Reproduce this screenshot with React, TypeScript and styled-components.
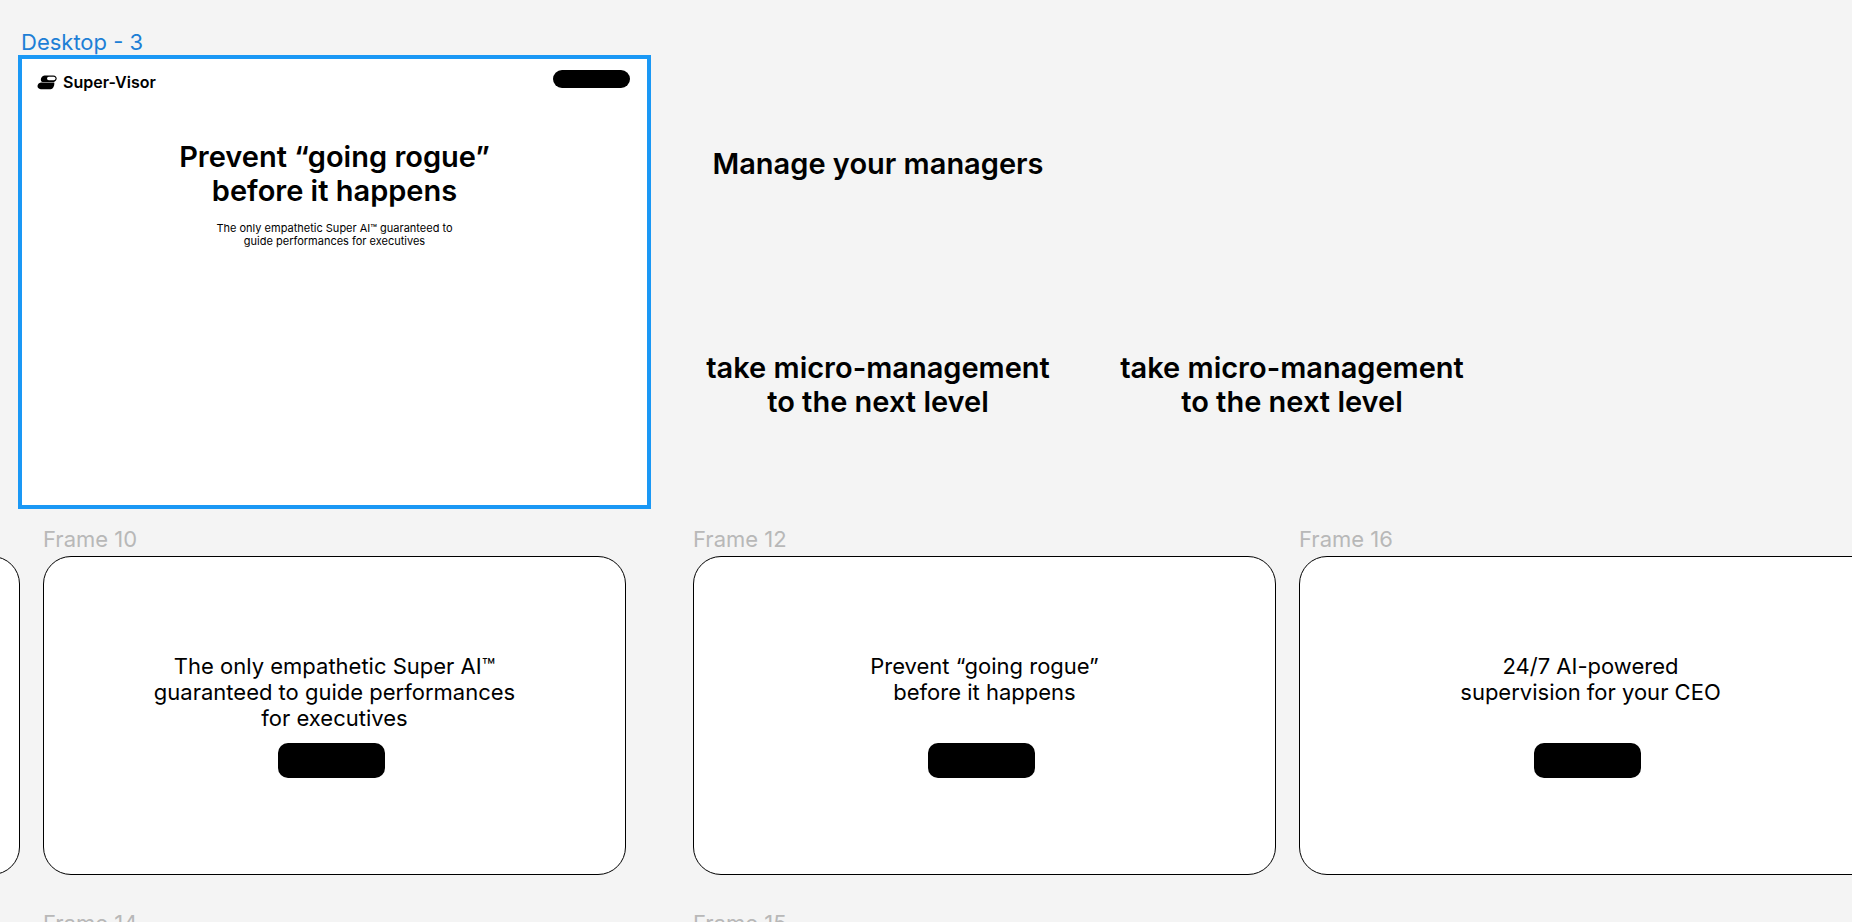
import React from "react";
import styled, { createGlobalStyle } from "styled-components";

const GlobalStyle = createGlobalStyle`
  *, *::before, *::after { box-sizing: border-box; }
  body {
    margin: 0;
    background: #f4f4f4;
    color: #000;
    font-family: Inter, "Liberation Sans", sans-serif;
  }
`;

const Canvas = styled.main`
  position: relative;
  height: 100vh;
  overflow: hidden;
`;

/* Anything placed freely on the canvas */
const Node = styled.section<{ $x: number; $y: number; $w: number }>`
  position: absolute;
  left: ${(p) => p.$x}px;
  top: ${(p) => p.$y}px;
  width: ${(p) => p.$w}px;
`;

const FrameLabel = styled.div<{ $selected?: boolean }>`
  padding: ${(p) => (p.$selected ? "0 0 2px 3px" : "0 0 6px")};
  min-height: ${(p) => (p.$selected ? 24 : 28)}px;
  font-size: 22px;
  line-height: 22px;
  white-space: nowrap;
  color: ${(p) => (p.$selected ? "#1d7fd6" : "#b8b8b8")};
`;

const DesktopFrame = styled.div`
  height: 454px;
  border: 4px solid #1a98f5;
  background: #fff;
`;

const TopBar = styled.header`
  display: flex;
  align-items: flex-start;
  justify-content: space-between;
  padding: 11px 17px 0 15px;
`;

const Brand = styled.a`
  display: flex;
  align-items: center;
  gap: 6px;
  margin-top: 2px;
  color: inherit;
  font-size: 16px;
  font-weight: 600;
  line-height: 20px;
  text-decoration: none;
`;

const Pill = styled.button`
  width: 77px;
  height: 18px;
  padding: 0;
  border: 0;
  border-radius: 9px;
  background: #000;
`;

const Hero = styled.div`
  display: flex;
  flex-direction: column;
  align-items: center;
  padding-top: 48px;
  text-align: center;
`;

const Heading = styled.h2`
  margin: 0;
  font-size: 29px;
  font-weight: 600;
  line-height: 34px;
  text-align: center;
  white-space: nowrap;
`;

const Lede = styled.p`
  margin: 14px 0 0;
  font-size: 11px;
  font-weight: 400;
  line-height: 13px;
`;

const Card = styled.article`
  display: flex;
  flex-direction: column;
  align-items: center;
  height: 319px;
  padding-top: 96px;
  border: 1px solid #000;
  border-radius: 28px;
  background: #fff;
`;

const CardText = styled.p`
  min-height: 78px;
  margin: 0 0 12px;
  font-size: 22px;
  font-weight: 400;
  line-height: 26px;
  text-align: center;
  white-space: nowrap;
`;

const CardButton = styled.button`
  width: 107px;
  height: 35px;
  margin-right: 6px;
  padding: 0;
  border: 0;
  border-radius: 10px;
  background: #000;
`;

const Logo = () => (
  <svg width="20" height="15" viewBox="0 0 20 15" aria-hidden="true">
    <path d="M7.500 .5H16.300C20.800 .8 20.500 6 17 6.900H5.500C2.500 6.600 3.800 .5 7.500 .5Z" />
    <path d="M4 7.400H17.200C17.800 9.500 16.500 14.300 13.500 14.300H3.700C-1 14 -.2 7.600 4 7.400Z" />
    <rect x="10" y="1.700" width="8.500" height="3.600" rx="1.800" fill="#fff" />
  </svg>
);

const Lines = ({ lines }: { lines: string[] }) => (
  <>
    {lines.map((line, i) => (
      <React.Fragment key={line}>
        {i > 0 && <br />}
        {line}
      </React.Fragment>
    ))}
  </>
);

const notes = [
  { x: 694, y: 147, lines: ["Manage your managers"] },
  { x: 694, y: 351, lines: ["take micro-management", "to the next level"] },
  { x: 1108, y: 351, lines: ["take micro-management", "to the next level"] },
];

const frames = [
  { x: -563, y: 528, name: "", lines: [] },
  {
    x: 43,
    y: 528,
    name: "Frame 10",
    lines: ["The only empathetic Super AI™", "guaranteed to guide performances", "for executives"],
  },
  { x: 693, y: 528, name: "Frame 12", lines: ["Prevent “going rogue”", "before it happens"] },
  { x: 1299, y: 528, name: "Frame 16", lines: ["24/7 AI-powered", "supervision for your CEO"] },
  { x: 43, y: 912, name: "Frame 14", lines: [] },
  { x: 693, y: 912, name: "Frame 15", lines: [] },
];

export default function App() {
  return (
    <>
      <GlobalStyle />
      <Canvas>
        <Node $x={18} $y={31} $w={633}>
          <FrameLabel $selected>Desktop - 3</FrameLabel>
          <DesktopFrame>
            <TopBar>
              <Brand href="#">
                <Logo />
                Super-Visor
              </Brand>
              <Pill aria-label="Get started" />
            </TopBar>
            <Hero>
              <Heading>
                <Lines lines={["Prevent “going rogue”", "before it happens"]} />
              </Heading>
              <Lede>
                <Lines lines={["The only empathetic Super AI™ guaranteed to", "guide performances for executives"]} />
              </Lede>
            </Hero>
          </DesktopFrame>
        </Node>

        {notes.map((note) => (
          <Node key={`${note.x}-${note.y}`} $x={note.x} $y={note.y} $w={368}>
            <Heading>
              <Lines lines={note.lines} />
            </Heading>
          </Node>
        ))}

        {frames.map((frame) => (
          <Node key={`${frame.x}-${frame.y}`} $x={frame.x} $y={frame.y} $w={583}>
            <FrameLabel>{frame.name}</FrameLabel>
            <Card>
              {frame.lines.length > 0 && (
                <>
                  <CardText>
                    <Lines lines={frame.lines} />
                  </CardText>
                  <CardButton aria-label="Learn more" />
                </>
              )}
            </Card>
          </Node>
        ))}
      </Canvas>
    </>
  );
}
